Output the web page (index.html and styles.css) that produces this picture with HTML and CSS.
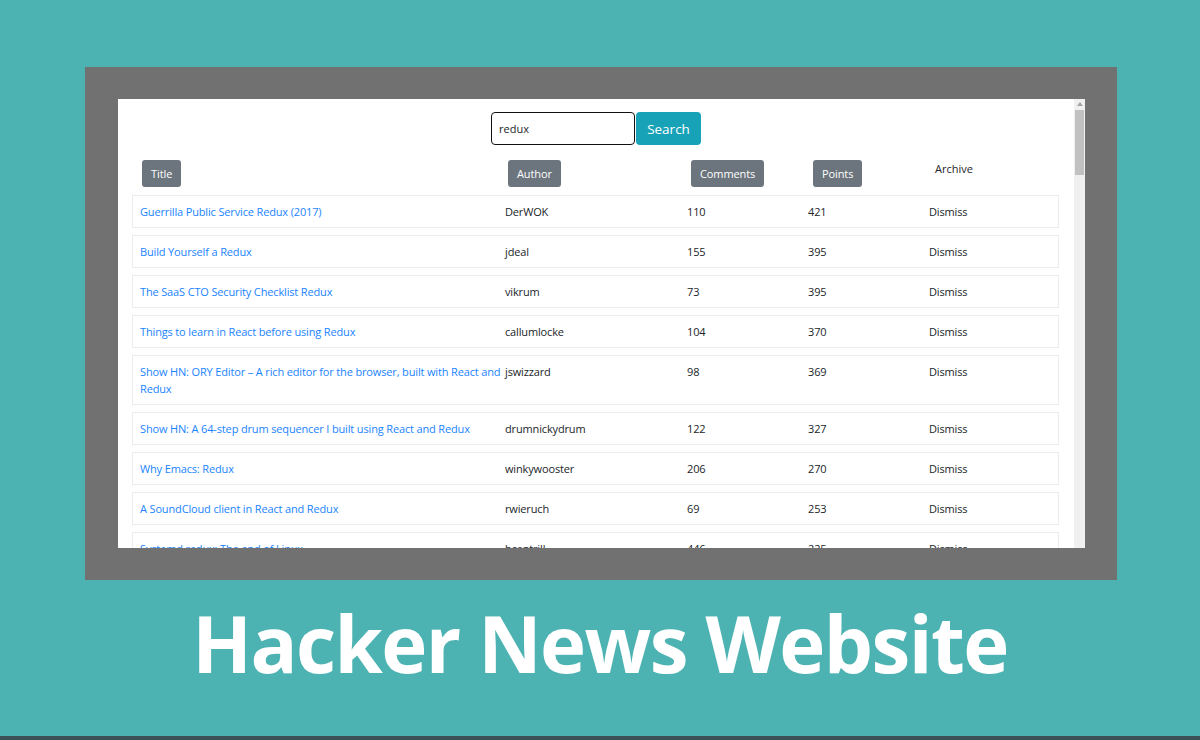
FILE: index.html
```html
<!DOCTYPE html>
<html>
<head>
<meta charset="utf-8">
<link rel="stylesheet" href="styles.css">
</head>
<body>
<div class="stage">
  <div class="frame">
    <div class="window">
      <div class="content">
        <form class="search">
          <input class="search-input" type="text" value="redux">
          <button class="search-btn" type="button">Search</button>
        </form>
        <div class="table">
          <div class="thead">
            <div class="th"><span class="sort-btn">Title</span></div>
            <div class="th"><span class="sort-btn">Author</span></div>
            <div class="th"><span class="sort-btn">Comments</span></div>
            <div class="th"><span class="sort-btn">Points</span></div>
            <div class="th th-text">Archive</div>
          </div>
          <div class="row"><a class="cell link">Guerrilla Public Service Redux (2017)</a><span class="cell">DerWOK</span><span class="cell">110</span><span class="cell">421</span><span class="cell">Dismiss</span></div>
          <div class="row"><a class="cell link">Build Yourself a Redux</a><span class="cell">jdeal</span><span class="cell">155</span><span class="cell">395</span><span class="cell">Dismiss</span></div>
          <div class="row"><a class="cell link">The SaaS CTO Security Checklist Redux</a><span class="cell">vikrum</span><span class="cell">73</span><span class="cell">395</span><span class="cell">Dismiss</span></div>
          <div class="row"><a class="cell link">Things to learn in React before using Redux</a><span class="cell">callumlocke</span><span class="cell">104</span><span class="cell">370</span><span class="cell">Dismiss</span></div>
          <div class="row"><a class="cell link">Show HN: ORY Editor – A rich editor for the browser, built with React and Redux</a><span class="cell">jswizzard</span><span class="cell">98</span><span class="cell">369</span><span class="cell">Dismiss</span></div>
          <div class="row"><a class="cell link">Show HN: A 64-step drum sequencer I built using React and Redux</a><span class="cell">drumnickydrum</span><span class="cell">122</span><span class="cell">327</span><span class="cell">Dismiss</span></div>
          <div class="row"><a class="cell link">Why Emacs: Redux</a><span class="cell">winkywooster</span><span class="cell">206</span><span class="cell">270</span><span class="cell">Dismiss</span></div>
          <div class="row"><a class="cell link">A SoundCloud client in React and Redux</a><span class="cell">rwieruch</span><span class="cell">69</span><span class="cell">253</span><span class="cell">Dismiss</span></div>
          <div class="row"><a class="cell link">Systemd redux: The end of Linux</a><span class="cell">bcantrill</span><span class="cell">446</span><span class="cell">225</span><span class="cell">Dismiss</span></div>
        </div>
      </div>
      <div class="scrollbar">
        <div class="sb-arrow"></div>
        <div class="sb-thumb"></div>
      </div>
    </div>
  </div>
  <h1 class="caption">Hacker News Website</h1>
</div>
<div class="bottom-strip"></div>
</body>
</html>
```

FILE: styles.css
```css
html, body {
  margin: 0;
  padding: 0;
}
body {
  width: 1200px;
  height: 740px;
  background: #4db3b2;
  overflow: hidden;
  font-family: "Open Sans", "Noto Sans", sans-serif;
  display: flex;
  flex-direction: column;
}
.stage {
  flex: 1;
  padding: 67px 0 0 85px;
}
.frame {
  width: 967px;
  height: 449px;
  padding: 32px 32px 32px 33px;
  background: #717171;
}
.window {
  width: 967px;
  height: 449px;
  background: #fff;
  display: flex;
  overflow: hidden;
}
.content {
  flex: 1;
  overflow: hidden;
}
.scrollbar {
  width: 11px;
  background: #f0f0f0;
  display: flex;
  flex-direction: column;
  align-items: center;
}
.sb-arrow {
  margin-top: 3px;
  width: 0;
  height: 0;
  border-left: 3px solid transparent;
  border-right: 3px solid transparent;
  border-bottom: 4px solid #a3a3a3;
}
.sb-thumb {
  margin-top: 4px;
  width: 9px;
  height: 65px;
  background: #c1c1c1;
}
.search {
  display: flex;
  justify-content: center;
  margin: 13px 0 0 0;
}
.search-input {
  box-sizing: border-box;
  width: 144px;
  height: 33px;
  border: 1.5px solid #111;
  border-radius: 4px;
  padding: 0 7px;
  font-family: "Open Sans", sans-serif;
  font-size: 11px;
  color: #212529;
  outline: none;
}
.search-btn {
  width: 65px;
  height: 33px;
  margin-left: 1px;
  border: none;
  border-radius: 4px;
  background: #17a2b8;
  color: #fff;
  font-family: "Open Sans", sans-serif;
  font-size: 13.5px;
  padding: 0;
}
.table {
  margin: 15px 15px 0 14px;
}
.thead {
  display: grid;
  grid-template-columns: 366px 183px 122px 122px 1fr;
  padding-left: 10px;
  height: 27px;
  margin-bottom: 8px;
}
.th {
  display: flex;
  align-items: flex-start;
}
.sort-btn {
  display: inline-block;
  height: 27px;
  line-height: 27px;
  padding: 0 9px;
  border-radius: 3px;
  background: #6c757d;
  color: #fff;
  font-size: 11px;
  letter-spacing: -0.1px;
}
.th-text {
  padding: 2px 0 0 0;
  font-size: 11px;
  color: #212529;
  line-height: 14px;
}
.row {
  display: grid;
  grid-template-columns: 365px 182px 121px 121px 1fr;
  border: 1px solid #ececec;
  padding: 7px 7px 7px 7px;
  margin-bottom: 7px;
  font-size: 11px;
  letter-spacing: -0.15px;
  line-height: 17px;
  color: #212529;
}
.link {
  color: #1a84ff;
  text-decoration: none;
}
.caption {
  margin: 18px 0 0 -85px;
  text-align: center;
  color: #fff;
  font-family: "Open Sans", sans-serif;
  font-weight: 700;
  font-size: 78px;
  letter-spacing: -1.6px;
  line-height: 90px;
}
.bottom-strip {
  height: 4px;
  background: #3b5157;
}
```
